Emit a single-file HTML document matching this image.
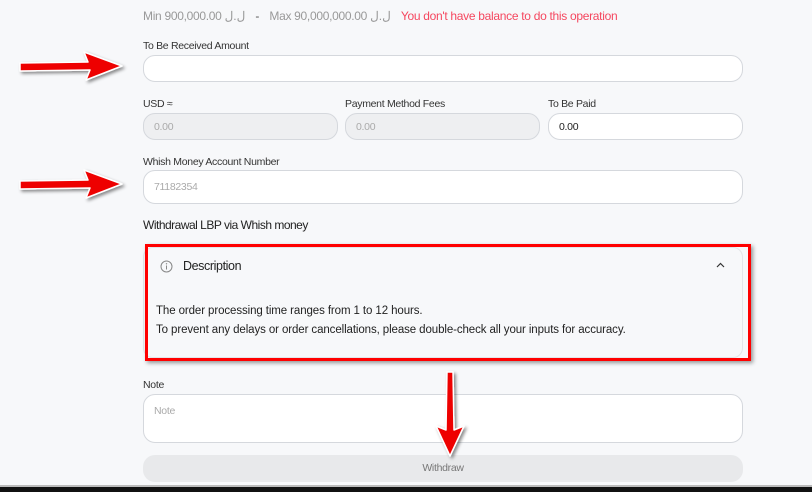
<!DOCTYPE html>
<html><head><meta charset="utf-8"><style>
*{box-sizing:border-box;margin:0;padding:0}
body{width:812px;height:492px;background:#f7f8fa;font-family:"Liberation Sans",sans-serif;color:#222;position:relative;overflow:hidden;letter-spacing:-0.3px}
.a{position:absolute}
.lbl{font-size:10.5px;color:#333}
.inp{position:absolute;background:#fff;border:1px solid #d5d8dd;border-radius:12px;font-size:10.5px;color:#aaa;padding-left:10px;display:flex;align-items:center}
.dis{background:#eeeff1}
</style></head><body>
<div class="a" style="left:143px;top:9px;font-size:12px;color:#999;letter-spacing:-0.3px">Min 900,000.00 ل.ل &nbsp;&nbsp;<span style="color:#555">-</span>&nbsp;&nbsp; Max 90,000,000.00 ل.ل &nbsp;&nbsp;<span style="color:#f5475f">You don't have balance to do this operation</span></div>
<div class="a lbl" style="left:143px;top:40px">To Be Received Amount</div>
<div class="inp" style="left:143px;top:55px;width:600px;height:27px"></div>
<div class="a lbl" style="left:143px;top:98px">USD ≈</div>
<div class="a lbl" style="left:345px;top:98px">Payment Method Fees</div>
<div class="a lbl" style="left:548px;top:98px">To Be Paid</div>
<div class="inp dis" style="left:143px;top:113px;width:195px;height:27px">0.00</div>
<div class="inp dis" style="left:345px;top:113px;width:195px;height:27px">0.00</div>
<div class="inp" style="left:548px;top:113px;width:195px;height:27px;color:#222">0.00</div>
<div class="a lbl" style="left:143px;top:156px">Whish Money Account Number</div>
<div class="inp" style="left:143px;top:170px;width:600px;height:34px">71182354</div>
<div class="a" style="left:143px;top:218px;font-size:12px;color:#222;letter-spacing:-0.5px">Withdrawal LBP via Whish money</div>
<div class="a" style="left:143px;top:247px;width:600px;height:111px;border:1px solid #e3e5e8;border-radius:10px;background:#f7f8fa"></div>
<div class="a" style="left:145px;top:244px;width:606px;height:117px;border:3px solid #f00;box-shadow:2px 2px 4px rgba(0,0,0,.4)"></div>
<svg class="a" style="left:160px;top:260px" width="13" height="13" viewBox="0 0 13 13"><circle cx="6.5" cy="6.5" r="5.5" fill="none" stroke="#888" stroke-width="1"/><line x1="6.5" y1="5.5" x2="6.5" y2="9.5" stroke="#888"/><circle cx="6.5" cy="3.8" r=".7" fill="#888"/></svg>
<div class="a" style="left:183px;top:259px;font-size:12.5px;letter-spacing:-0.4px">Description</div>
<svg class="a" style="left:716px;top:262px" width="9" height="6"><path d="M1 5 L4.5 1.5 L8 5" fill="none" stroke="#333" stroke-width="1.2"/></svg>
<div class="a" style="left:156px;top:302px;font-size:11.5px;line-height:19px;letter-spacing:-0.1px">The order processing time ranges from 1 to 12 hours.<br>To prevent any delays or order cancellations, please double-check all your inputs for accuracy.</div>
<div class="a lbl" style="left:143px;top:379px">Note</div>
<div class="inp" style="left:143px;top:394px;width:600px;height:49px;align-items:flex-start;padding-top:10px">Note</div>
<div class="a" style="left:143px;top:455px;width:600px;height:27px;background:#e8e9eb;border-radius:12px;font-size:10.5px;color:#777;text-align:center;line-height:27px">Withdraw</div>
<div class="a" style="left:0;top:485px;width:812px;height:2px;background:#bbb"></div>
<div class="a" style="left:0;top:487px;width:812px;height:5px;background:#111"></div>
<svg class="a" style="left:0;top:0" width="812" height="492">
<defs><filter id="s"><feDropShadow dx="2" dy="2" stdDeviation="1.5" flood-opacity=".45"/></filter></defs>
<g filter="url(#s)" fill="#e00" stroke="#fff" stroke-width="1.5" stroke-linejoin="round">
<path d="M20 63 L88 62 L84 52 L122 66 L86 80 L90 70 L20 71 Z"/>
<path d="M20 181 L88 180 L84 170 L122 184 L86 198 L90 188 L20 189 Z"/>
<path d="M447 372 L453 372 L454 430 L464 426 L450 456 L436 426 L446 430 Z"/>
</g></svg>
</body></html>
